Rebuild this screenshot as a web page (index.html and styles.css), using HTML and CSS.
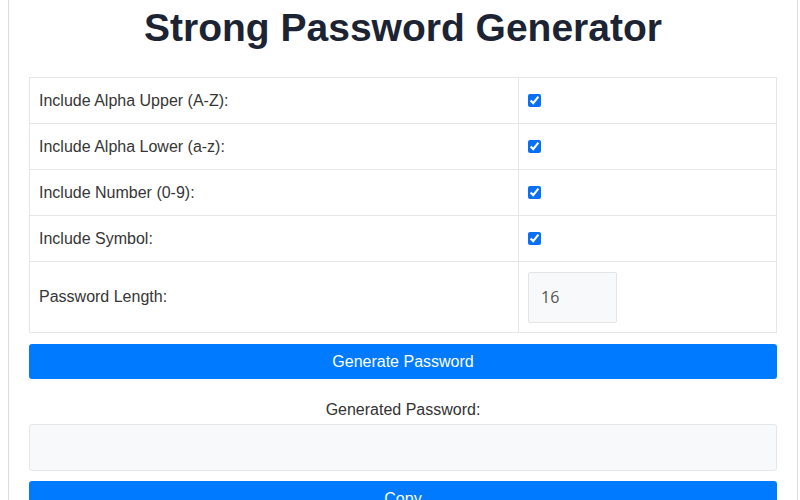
FILE: index.html
```html
<!DOCTYPE html>
<html lang="en">
<head>
<meta charset="utf-8">
<title>Strong Password Generator</title>
<link rel="stylesheet" href="styles.css">
</head>
<body>
<div class="container">
  <h1 class="title">Strong Password Generator</h1>
  <div class="options">
    <div class="row">
      <div class="cell label">Include Alpha Upper (A-Z):</div>
      <div class="cell control"><input type="checkbox" checked></div>
    </div>
    <div class="row">
      <div class="cell label">Include Alpha Lower (a-z):</div>
      <div class="cell control"><input type="checkbox" checked></div>
    </div>
    <div class="row">
      <div class="cell label">Include Number (0-9):</div>
      <div class="cell control"><input type="checkbox" checked></div>
    </div>
    <div class="row">
      <div class="cell label">Include Symbol:</div>
      <div class="cell control"><input type="checkbox" checked></div>
    </div>
    <div class="row row-tall">
      <div class="cell label">Password Length:</div>
      <div class="cell control"><input class="length" type="number" value="16"></div>
    </div>
  </div>
  <button class="btn" type="button">Generate Password</button>
  <div class="result-label">Generated Password:</div>
  <div class="result"></div>
  <button class="btn btn-copy" type="button">Copy</button>
</div>
</body>
</html>
```
FILE: styles.css
```css
html, body {
  margin: 0;
  padding: 0;
  background: #ffffff;
  overflow: hidden;
}
body {
  font-family: "Liberation Sans", Arial, sans-serif;
  font-size: 16px;
  color: #333333;
}
.container {
  box-sizing: border-box;
  width: 790px;
  margin-left: 8px;
  padding: 0 20px 20px;
  border-left: 1px solid #dcdcdc;
  border-right: 1px solid #dcdcdc;
  min-height: 520px;
}
.title {
  margin: 0;
  padding-top: 5px;
  height: 77px;
  box-sizing: border-box;
  text-align: center;
  font-size: 39px;
  line-height: 46px;
  font-weight: bold;
  color: #1c2434;
}
.options {
  border: 1px solid #e6e6e6;
}
.row {
  display: grid;
  grid-template-columns: 488px 1fr;
  height: 45px;
}
.row + .row {
  border-top: 1px solid #e6e6e6;
}
.row-tall {
  height: 70px;
}
.cell {
  display: flex;
  align-items: center;
  padding: 0 9px;
}
.label {
  color: #363636;
}
.control {
  border-left: 1px solid #e6e6e6;
}
.control input[type="checkbox"] {
  margin: 0;
  width: 13px;
  height: 13px;
  accent-color: #0b6ff5;
}
.length {
  box-sizing: border-box;
  width: 89px;
  height: 51px;
  margin: 0;
  padding: 0 12px;
  border: 1px solid #e4e4e4;
  border-radius: 2px;
  background: #f8f9fa;
  font-family: "Open Sans", "Liberation Sans", sans-serif;
  font-size: 16px;
  color: #555555;
  -moz-appearance: textfield;
}
.length::-webkit-inner-spin-button,
.length::-webkit-outer-spin-button {
  -webkit-appearance: none;
  margin: 0;
}
.btn {
  display: block;
  width: 100%;
  height: 35px;
  margin-top: 11px;
  padding: 0;
  border: none;
  border-radius: 3px;
  background: #007bff;
  color: #ffffff;
  font-family: "Liberation Sans", Arial, sans-serif;
  font-size: 16px;
}
.result-label {
  margin-top: 19px;
  line-height: 24px;
  text-align: center;
  color: #333333;
}
.result {
  box-sizing: border-box;
  height: 47px;
  margin-top: 2px;
  border: 1px solid #e6e6e6;
  border-radius: 3px;
  background: #f8f9fa;
}
.btn-copy {
  margin-top: 10px;
}
```
